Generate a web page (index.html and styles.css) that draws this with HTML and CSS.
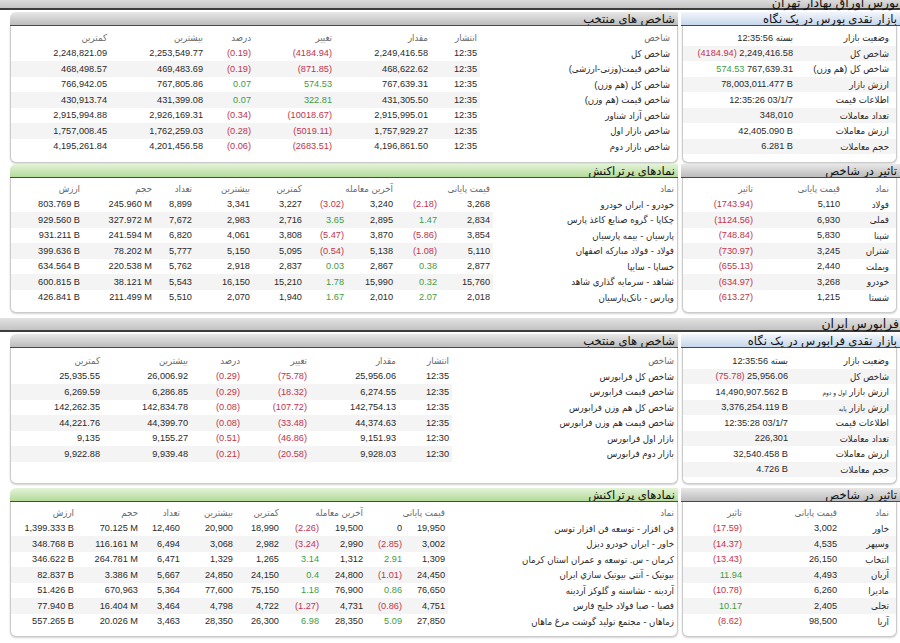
FILE: index.html
```html
<!DOCTYPE html>
<html lang="fa" dir="rtl">
<head>
<meta charset="utf-8">
<title>بورس</title>
<link rel="stylesheet" href="styles.css">
</head>
<body>
<div class="section-bar first">بورس اوراق بهادار تهران</div>

<div class="block blk-a">
  <div class="col-side">
    <div class="title title-blue">بازار نقدی بورس در یک نگاه</div>
    <div class="body">
      <table class="glance g1">
        <colgroup><col><col></colgroup>
        <tbody>
          <tr><td class="lbl">وضعیت بازار</td><td class="num">12:35:56 <span class="ar">بسته</span></td></tr>
          <tr><td class="lbl">شاخص کل</td><td class="num"><span class="neg">(4184.94)</span> 2,249,416.58</td></tr>
          <tr><td class="lbl">شاخص کل (هم وزن)</td><td class="num"><span class="pos">574.53</span> 767,639.31</td></tr>
          <tr><td class="lbl">ارزش بازار</td><td class="num">78,003,011.477 B</td></tr>
          <tr><td class="lbl">اطلاعات قیمت</td><td class="num">12:35:26 03/1/7</td></tr>
          <tr><td class="lbl">تعداد معاملات</td><td class="num">348,010</td></tr>
          <tr><td class="lbl">ارزش معاملات</td><td class="num">42,405.090 B</td></tr>
          <tr><td class="lbl">حجم معاملات</td><td class="num">6.281 B</td></tr>
        </tbody>
      </table>
    </div>
  </div>
  <div class="col-main">
    <div class="title title-gray">شاخص های منتخب</div>
    <div class="body">
      <table class="idx t1">
        <colgroup><col><col><col><col><col><col><col></colgroup>
        <thead>
          <tr><th class="name">شاخص</th><th>انتشار</th><th>مقدار</th><th>تغییر</th><th>درصد</th><th>بیشترین</th><th>کمترین</th></tr>
        </thead>
        <tbody>
          <tr><td class="name">شاخص کل</td><td class="num">12:35</td><td class="num">2,249,416.58</td><td class="num neg">(4184.94)</td><td class="num neg">(0.19)</td><td class="num">2,253,549.77</td><td class="num">2,248,821.09</td></tr>
          <tr><td class="name">شاخص قیمت(وزنی-ارزشی)</td><td class="num">12:35</td><td class="num">468,622.62</td><td class="num neg">(871.85)</td><td class="num neg">(0.19)</td><td class="num">469,483.69</td><td class="num">468,498.57</td></tr>
          <tr><td class="name">شاخص کل (هم وزن)</td><td class="num">12:35</td><td class="num">767,639.31</td><td class="num pos">574.53</td><td class="num pos">0.07</td><td class="num">767,805.86</td><td class="num">766,942.05</td></tr>
          <tr><td class="name">شاخص قیمت (هم وزن)</td><td class="num">12:35</td><td class="num">431,305.50</td><td class="num pos">322.81</td><td class="num pos">0.07</td><td class="num">431,399.08</td><td class="num">430,913.74</td></tr>
          <tr><td class="name">شاخص آزاد شناور</td><td class="num">12:35</td><td class="num">2,915,995.01</td><td class="num neg">(10018.67)</td><td class="num neg">(0.34)</td><td class="num">2,926,169.31</td><td class="num">2,915,994.88</td></tr>
          <tr><td class="name">شاخص بازار اول</td><td class="num">12:35</td><td class="num">1,757,929.27</td><td class="num neg">(5019.11)</td><td class="num neg">(0.28)</td><td class="num">1,762,259.03</td><td class="num">1,757,008.45</td></tr>
          <tr><td class="name">شاخص بازار دوم</td><td class="num">12:35</td><td class="num">4,196,861.50</td><td class="num neg">(2683.51)</td><td class="num neg">(0.06)</td><td class="num">4,201,456.58</td><td class="num">4,195,261.84</td></tr>
        </tbody>
      </table>
    </div>
  </div>
</div>

<div class="block blk-b">
  <div class="col-side">
    <div class="title title-gray">تاثیر در شاخص</div>
    <div class="body">
      <table class="eff e1">
        <colgroup><col><col><col></colgroup>
        <thead><tr><th class="lbl">نماد</th><th>قیمت پایانی</th><th>تاثیر</th></tr></thead>
        <tbody>
          <tr><td class="lbl">فولاد</td><td class="num">5,110</td><td class="num neg">(1743.94)</td></tr>
          <tr><td class="lbl">فملی</td><td class="num">6,930</td><td class="num neg">(1124.56)</td></tr>
          <tr><td class="lbl">شپنا</td><td class="num">5,830</td><td class="num neg">(748.84)</td></tr>
          <tr><td class="lbl">شتران</td><td class="num">3,245</td><td class="num neg">(730.97)</td></tr>
          <tr><td class="lbl">وبملت</td><td class="num">2,440</td><td class="num neg">(655.13)</td></tr>
          <tr><td class="lbl">خودرو</td><td class="num">3,268</td><td class="num neg">(634.97)</td></tr>
          <tr><td class="lbl">شستا</td><td class="num">1,215</td><td class="num neg">(613.27)</td></tr>
        </tbody>
      </table>
    </div>
  </div>
  <div class="col-main">
    <div class="title title-green">نمادهای پرتراکنش</div>
    <div class="body">
      <table class="sym s1">
        <colgroup><col><col><col><col><col><col><col><col><col><col></colgroup>
        <thead>
          <tr><th class="name">نماد</th><th colspan="2">قیمت پایانی</th><th colspan="2">آخرین معامله</th><th>کمترین</th><th>بیشترین</th><th>تعداد</th><th>حجم</th><th>ارزش</th></tr>
        </thead>
        <tbody>
          <tr><td class="name">خودرو - ایران خودرو</td><td class="num">3,268</td><td class="num neg">(2.18)</td><td class="num">3,240</td><td class="num neg">(3.02)</td><td class="num">3,227</td><td class="num">3,341</td><td class="num">8,899</td><td class="num">245.960 M</td><td class="num">803.769 B</td></tr>
          <tr><td class="name">چکاپا - گروه صنایع کاغذ پارس</td><td class="num">2,834</td><td class="num pos">1.47</td><td class="num">2,895</td><td class="num pos">3.65</td><td class="num">2,716</td><td class="num">2,983</td><td class="num">7,672</td><td class="num">327.972 M</td><td class="num">929.560 B</td></tr>
          <tr><td class="name">پارسیان - بیمه پارسیان</td><td class="num">3,854</td><td class="num neg">(5.86)</td><td class="num">3,870</td><td class="num neg">(5.47)</td><td class="num">3,808</td><td class="num">4,061</td><td class="num">6,820</td><td class="num">241.594 M</td><td class="num">931.211 B</td></tr>
          <tr><td class="name">فولاد - فولاد مبارکه اصفهان</td><td class="num">5,110</td><td class="num neg">(1.08)</td><td class="num">5,138</td><td class="num neg">(0.54)</td><td class="num">5,095</td><td class="num">5,150</td><td class="num">5,777</td><td class="num">78.202 M</td><td class="num">399.636 B</td></tr>
          <tr><td class="name">خساپا - سایپا</td><td class="num">2,877</td><td class="num pos">0.38</td><td class="num">2,867</td><td class="num pos">0.03</td><td class="num">2,837</td><td class="num">2,918</td><td class="num">5,762</td><td class="num">220.538 M</td><td class="num">634.564 B</td></tr>
          <tr><td class="name">ثشاهد - سرمایه گذاری شاهد</td><td class="num">15,760</td><td class="num pos">0.32</td><td class="num">15,990</td><td class="num pos">1.78</td><td class="num">15,210</td><td class="num">16,150</td><td class="num">5,543</td><td class="num">38.121 M</td><td class="num">600.815 B</td></tr>
          <tr><td class="name">وپارس - بانک‌پارسیان</td><td class="num">2,018</td><td class="num pos">2.07</td><td class="num">2,010</td><td class="num pos">1.67</td><td class="num">1,940</td><td class="num">2,070</td><td class="num">5,510</td><td class="num">211.499 M</td><td class="num">426.841 B</td></tr>
        </tbody>
      </table>
    </div>
  </div>
</div>

<div class="section-bar second">فرابورس ایران</div>

<div class="block blk-c">
  <div class="col-side">
    <div class="title title-blue">بازار نقدی فرابورس در یک نگاه</div>
    <div class="body">
      <table class="glance g2">
        <colgroup><col><col></colgroup>
        <tbody>
          <tr><td class="lbl">وضعیت بازار</td><td class="num">12:35:56 <span class="ar">بسته</span></td></tr>
          <tr><td class="lbl">شاخص کل</td><td class="num"><span class="neg">(75.78)</span> 25,956.06</td></tr>
          <tr><td class="lbl">ارزش بازار <span class="small">اول و دوم</span></td><td class="num">14,490,907.562 B</td></tr>
          <tr><td class="lbl">ارزش بازار <span class="small">پایه</span></td><td class="num">3,376,254.119 B</td></tr>
          <tr><td class="lbl">اطلاعات قیمت</td><td class="num">12:35:28 03/1/7</td></tr>
          <tr><td class="lbl">تعداد معاملات</td><td class="num">226,301</td></tr>
          <tr><td class="lbl">ارزش معاملات</td><td class="num">32,540.458 B</td></tr>
          <tr><td class="lbl">حجم معاملات</td><td class="num">4.726 B</td></tr>
        </tbody>
      </table>
    </div>
  </div>
  <div class="col-main">
    <div class="title title-gray">شاخص های منتخب</div>
    <div class="body">
      <table class="idx t3">
        <colgroup><col><col><col><col><col><col><col></colgroup>
        <thead>
          <tr><th class="name">شاخص</th><th>انتشار</th><th>مقدار</th><th>تغییر</th><th>درصد</th><th>بیشترین</th><th>کمترین</th></tr>
        </thead>
        <tbody>
          <tr><td class="name">شاخص کل فرابورس</td><td class="num">12:35</td><td class="num">25,956.06</td><td class="num neg">(75.78)</td><td class="num neg">(0.29)</td><td class="num">26,006.92</td><td class="num">25,935.55</td></tr>
          <tr><td class="name">شاخص قیمت فرابورس</td><td class="num">12:35</td><td class="num">6,274.55</td><td class="num neg">(18.32)</td><td class="num neg">(0.29)</td><td class="num">6,286.85</td><td class="num">6,269.59</td></tr>
          <tr><td class="name">شاخص کل هم وزن فرابورس</td><td class="num">12:35</td><td class="num">142,754.13</td><td class="num neg">(107.72)</td><td class="num neg">(0.08)</td><td class="num">142,834.78</td><td class="num">142,262.35</td></tr>
          <tr><td class="name">شاخص قیمت هم وزن فرابورس</td><td class="num">12:35</td><td class="num">44,374.63</td><td class="num neg">(33.48)</td><td class="num neg">(0.08)</td><td class="num">44,399.70</td><td class="num">44,221.76</td></tr>
          <tr><td class="name">بازار اول فرابورس</td><td class="num">12:30</td><td class="num">9,151.93</td><td class="num neg">(46.86)</td><td class="num neg">(0.51)</td><td class="num">9,155.27</td><td class="num">9,135</td></tr>
          <tr><td class="name">بازار دوم فرابورس</td><td class="num">12:30</td><td class="num">9,928.03</td><td class="num neg">(20.58)</td><td class="num neg">(0.21)</td><td class="num">9,939.48</td><td class="num">9,922.88</td></tr>
        </tbody>
      </table>
    </div>
  </div>
</div>

<div class="block blk-d">
  <div class="col-side">
    <div class="title title-gray">تاثیر در شاخص</div>
    <div class="body">
      <table class="eff e2">
        <colgroup><col><col><col></colgroup>
        <thead><tr><th class="lbl">نماد</th><th>قیمت پایانی</th><th>تاثیر</th></tr></thead>
        <tbody>
          <tr><td class="lbl">خاور</td><td class="num">3,002</td><td class="num neg">(17.59)</td></tr>
          <tr><td class="lbl">وسپهر</td><td class="num">4,535</td><td class="num neg">(14.37)</td></tr>
          <tr><td class="lbl">انتخاب</td><td class="num">26,150</td><td class="num neg">(13.43)</td></tr>
          <tr><td class="lbl">آریان</td><td class="num">4,493</td><td class="num pos">11.94</td></tr>
          <tr><td class="lbl">مادیرا</td><td class="num">6,260</td><td class="num neg">(10.78)</td></tr>
          <tr><td class="lbl">تجلی</td><td class="num">2,405</td><td class="num pos">10.17</td></tr>
          <tr><td class="lbl">آریا</td><td class="num">98,500</td><td class="num neg">(8.62)</td></tr>
        </tbody>
      </table>
    </div>
  </div>
  <div class="col-main">
    <div class="title title-green">نمادهای پرتراکنش</div>
    <div class="body">
      <table class="sym s2">
        <colgroup><col><col><col><col><col><col><col><col><col><col></colgroup>
        <thead>
          <tr><th class="name">نماد</th><th colspan="2">قیمت پایانی</th><th colspan="2">آخرین معامله</th><th>کمترین</th><th>بیشترین</th><th>تعداد</th><th>حجم</th><th>ارزش</th></tr>
        </thead>
        <tbody>
          <tr><td class="name">فن افزار - توسعه فن افزار توسن</td><td class="num">19,950</td><td class="num">0</td><td class="num">19,500</td><td class="num neg">(2.26)</td><td class="num">18,990</td><td class="num">20,900</td><td class="num">12,460</td><td class="num">70.125 M</td><td class="num">1,399.333 B</td></tr>
          <tr><td class="name">خاور - ایران خودرو دیزل</td><td class="num">3,002</td><td class="num neg">(2.85)</td><td class="num">2,990</td><td class="num neg">(3.24)</td><td class="num">2,982</td><td class="num">3,068</td><td class="num">6,494</td><td class="num">116.161 M</td><td class="num">348.768 B</td></tr>
          <tr><td class="name">کرمان - س. توسعه و عمران استان کرمان</td><td class="num">1,309</td><td class="num pos">2.91</td><td class="num">1,312</td><td class="num pos">3.14</td><td class="num">1,265</td><td class="num">1,329</td><td class="num">6,471</td><td class="num">264.781 M</td><td class="num">346.622 B</td></tr>
          <tr><td class="name">بیوتیک - آنتي بیوتیک سازي ایران</td><td class="num">24,450</td><td class="num neg">(1.01)</td><td class="num">24,800</td><td class="num pos">0.4</td><td class="num">24,150</td><td class="num">24,850</td><td class="num">5,667</td><td class="num">3.386 M</td><td class="num">82.837 B</td></tr>
          <tr><td class="name">آردینه - نشاسته و گلوکز آردینه</td><td class="num">76,650</td><td class="num pos">0.86</td><td class="num">76,900</td><td class="num pos">1.18</td><td class="num">75,150</td><td class="num">77,600</td><td class="num">5,364</td><td class="num">670,963</td><td class="num">51.426 B</td></tr>
          <tr><td class="name">فصبا - صبا فولاد خلیج فارس</td><td class="num">4,751</td><td class="num neg">(0.86)</td><td class="num">4,731</td><td class="num neg">(1.27)</td><td class="num">4,722</td><td class="num">4,798</td><td class="num">3,464</td><td class="num">16.404 M</td><td class="num">77.940 B</td></tr>
          <tr><td class="name">زماهان - مجتمع تولید گوشت مرغ ماهان</td><td class="num">27,850</td><td class="num pos">5.09</td><td class="num">28,350</td><td class="num pos">6.98</td><td class="num">26,300</td><td class="num">28,350</td><td class="num">3,463</td><td class="num">20.026 M</td><td class="num">557.265 B</td></tr>
        </tbody>
      </table>
    </div>
  </div>
</div>
</body>
</html>
```

FILE: styles.css
```css
* { box-sizing: border-box; }

html, body {
  margin: 0;
  padding: 0;
  background: #ffffff;
}

body {
  width: 900px;
  height: 643px;
  overflow: hidden;
  font-family: "Liberation Sans", "DejaVu Sans", sans-serif;
  font-size: 9.2px;
  color: #2a2a2a;
}

/* section header bars */
.section-bar {
  height: 14px;
  border-bottom: 2px solid #3d3d3d;
  background: linear-gradient(#e2e2e2, #c4c4c4);
  font-size: 12.5px;
  line-height: 12px;
  padding-right: 1px;
  color: #111;
  white-space: nowrap;
}
.section-bar.first { margin-top: -2px; height: 12px; line-height: 10px; }
.section-bar.second { margin-top: 5px; }

/* panel rows */
.block {
  display: flex;
  gap: 3px;
  padding-left: 10px;
  align-items: stretch;
}
.blk-a { margin-top: 2px; }
.blk-b { margin-top: 1px; }
.blk-c { margin-top: 2px; }
.blk-d { margin-top: 4px; }

.col-side {
  width: 219px;
  display: flex;
  flex-direction: column;
}
.col-main {
  flex: 1;
  display: flex;
  flex-direction: column;
}

.title {
  height: 14px;
  border-bottom: 1px solid #4a4a4a;
  font-size: 11.6px;
  line-height: 13px;
  padding-right: 3px;
  color: #111;
  white-space: nowrap;
  overflow: hidden;
}
.col-main .title { border-top-left-radius: 6px; }
.title-gray { background: linear-gradient(#e8e8e8, #bcbcbc); }
.title-blue { background: linear-gradient(#f3f6fb, #c6d6ec); }
.title-green { background: linear-gradient(#e4f3d8, #b3db99); }

.body {
  flex: 1;
  background: #fff;
  border: 1px solid #cbcbcb;
  border-top: 0;
  border-radius: 0 0 6px 6px;
  box-shadow: 0 1px 2px rgba(0, 0, 0, 0.18);
  padding: 3px 0 7px;
}
.col-side .body { margin: 0 3px 0 1px; }
.blk-a .body { padding: 4px 0 8px; }
.blk-c .body { padding: 5px 0 6px; }

/* tables */
table {
  border-collapse: collapse;
  table-layout: fixed;
  width: 100%;
}
th, td {
  height: 15.5px;
  padding: 0 3px;
  text-align: right;
  font-weight: normal;
  white-space: nowrap;
  overflow: hidden;
}
th { color: #6a6a6a; }
th, .name, .lbl, .ar {
  font-family: "Liberation Sans", "DejaVu Sans Condensed", "DejaVu Sans", sans-serif;
  font-stretch: condensed;
  font-size: 9.6px;
}
.num { direction: ltr; text-align: right; }
.neg { color: #c2334b; }
.pos { color: #3f9b3f; }
.lbl .small { font-size: 6.5px; }

tbody tr:nth-child(even) td { background: #f4f4f4; }
.sym tbody tr:nth-child(even) td.name,
.idx tbody tr:nth-child(even) td.name { background: transparent; }

.glance .lbl, .eff .lbl { padding-right: 7px; }

/* column widths */
.t1 col:nth-child(1) { width: 197px; }
.t1 col:nth-child(2) { width: 49px; }
.t1 col:nth-child(3) { width: 96px; }
.t1 col:nth-child(4) { width: 81px; }
.t1 col:nth-child(5) { width: 48px; }
.t1 col:nth-child(6) { width: 96px; }
.t1 col:nth-child(7) { width: 99px; }
.t1 .name { padding-right: 7px; }

.t3 col:nth-child(1) { width: 225px; }
.t3 col:nth-child(2) { width: 53px; }
.t3 col:nth-child(3) { width: 89px; }
.t3 col:nth-child(4) { width: 67px; }
.t3 col:nth-child(5) { width: 52px; }
.t3 col:nth-child(6) { width: 88px; }
.t3 col:nth-child(7) { width: 92px; }

.s1 col:nth-child(1) { width: 184px; }
.s1 col:nth-child(2) { width: 53px; }
.s1 col:nth-child(3) { width: 44px; }
.s1 col:nth-child(4) { width: 49px; }
.s1 col:nth-child(5) { width: 42px; }
.s1 col:nth-child(6) { width: 52px; }
.s1 col:nth-child(7) { width: 58px; }
.s1 col:nth-child(8) { width: 40px; }
.s1 col:nth-child(9) { width: 72px; }
.s1 col:nth-child(10) { width: 72px; }

.s2 col:nth-child(1) { width: 229px; }
.s2 col:nth-child(2) { width: 43px; }
.s2 col:nth-child(3) { width: 39px; }
.s2 col:nth-child(4) { width: 44px; }
.s2 col:nth-child(5) { width: 40px; }
.s2 col:nth-child(6) { width: 46px; }
.s2 col:nth-child(7) { width: 53px; }
.s2 col:nth-child(8) { width: 42px; }
.s2 col:nth-child(9) { width: 64px; }
.s2 col:nth-child(10) { width: 66px; }

.g1 col:nth-child(1) { width: 100px; }
.g1 col:nth-child(2) { width: 113px; }
.g2 col:nth-child(1) { width: 105px; }
.g2 col:nth-child(2) { width: 108px; }

.e1 col:nth-child(1) { width: 53px; }
.e1 col:nth-child(2) { width: 87px; }
.e1 col:nth-child(3) { width: 73px; }
.e2 col:nth-child(1) { width: 56px; }
.e2 col:nth-child(2) { width: 95px; }
.e2 col:nth-child(3) { width: 62px; }
```
